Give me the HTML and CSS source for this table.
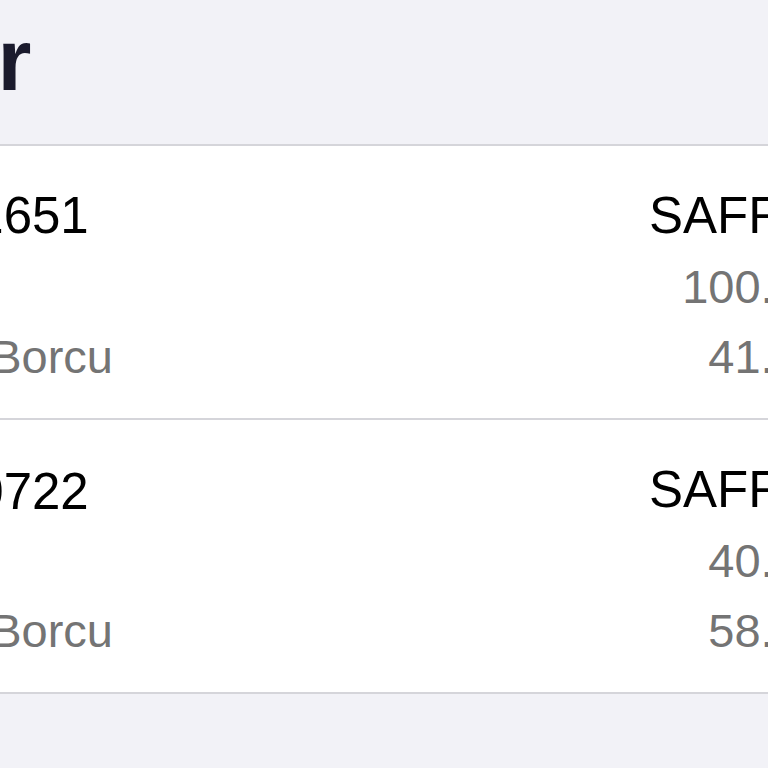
FILE: index.html
```html
<!DOCTYPE html>
<html lang="tr">
<head>
  <meta charset="UTF-8">
  <meta name="viewport" content="width=device-width, initial-scale=1.0">
  <title>Faturalar</title>
  <link rel="stylesheet" href="styles.css">
</head>
<body>
  <div class="page">
    <div class="header">
      <h1 class="title">Faturalar</h1>
    </div>

    <div class="list">
      <div class="row">
        <div class="code">Abone No: 5401651</div>
        <div class="name">SAFRANBOLU BELEDİYESİ</div>
        <div class="label">Fatura Tutarı</div>
        <div class="amount">100.00 TL</div>
        <div class="label">Gecikmiş Fatura Borcu</div>
        <div class="amount">41.20 TL</div>
      </div>

      <div class="row">
        <div class="code">Abone No: 5400722</div>
        <div class="name">SAFRANBOLU BELEDİYESİ</div>
        <div class="label">Fatura Tutarı</div>
        <div class="amount">40.00 TL</div>
        <div class="label">Gecikmiş Fatura Borcu</div>
        <div class="amount">58.60 TL</div>
      </div>
    </div>
  </div>
</body>
</html>
```

FILE: styles.css
```css
html, body {
  margin: 0;
  height: 100%;
  overflow: hidden;
}
body {
  font-family: 'Liberation Sans', Arial, sans-serif;
  background-color: #f2f2f7;
}
.page {
  margin-left: -365px;
  width: 1400px;
}
.header {
  height: 144px;
  padding: 8px 0 0 24px;
  box-sizing: border-box;
}
.title {
  margin: 0;
  font-size: 87px;
  font-weight: 700;
  line-height: 104px;
  color: #1b1b2d;
}
.list {
  background: #fff;
  border-top: 2px solid #d5d5da;
}
.row {
  display: grid;
  grid-template-columns: 1014px 244px;
  grid-template-rows: 72px 70px 70px;
  padding: 34px 0 26px;
  border-bottom: 2px solid #d5d5da;
  white-space: nowrap;
}
.row + .row .code {
  line-height: 76px;
}
.code, .name {
  font-size: 51px;
  line-height: 72px;
  color: #000;
}
.label, .amount {
  font-size: 47px;
  line-height: 70px;
  color: #747474;
}
.amount {
  text-align: right;
}
```
